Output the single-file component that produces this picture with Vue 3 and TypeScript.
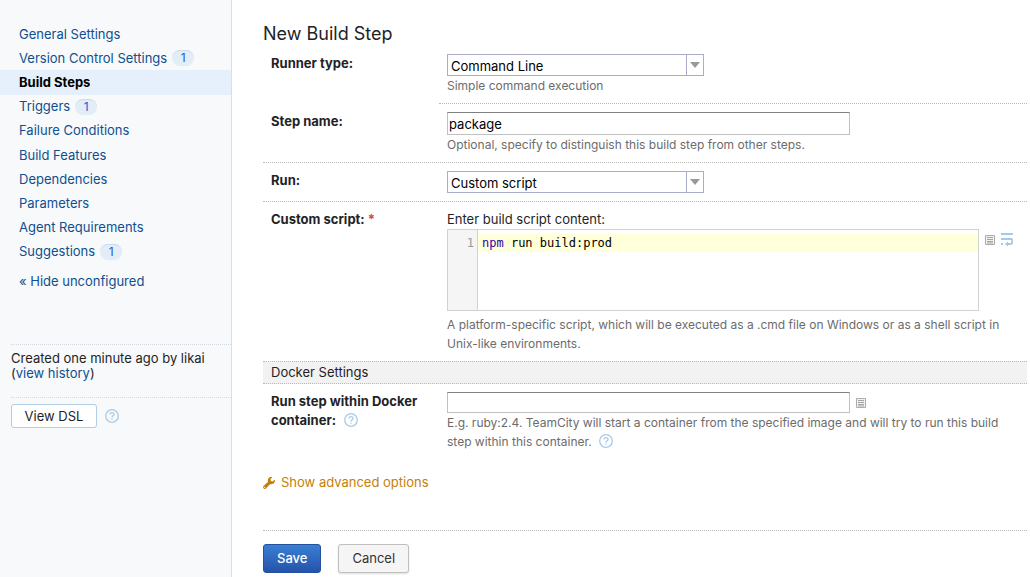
<script setup lang="ts">
import { computed, ref } from 'vue'

interface NavItem {
  label: string
  count?: number
  active?: boolean
}

const navItems: NavItem[] = [
  { label: 'General Settings' },
  { label: 'Version Control Settings', count: 1 },
  { label: 'Build Steps', active: true },
  { label: 'Triggers', count: 1 },
  { label: 'Failure Conditions' },
  { label: 'Build Features' },
  { label: 'Dependencies' },
  { label: 'Parameters' },
  { label: 'Agent Requirements' },
  { label: 'Suggestions', count: 1 },
]

const runnerType = ref('Command Line')
const stepName = ref('package')
const runMode = ref('Custom script')
const script = ref('npm run build:prod')
const dockerImage = ref('')

const scriptLines = computed(() =>
  script.value.split('\n').map((line) => {
    const command = line.match(/^npm\b/)?.[0] ?? ''
    return { command, rest: line.slice(command.length) }
  }),
)
</script>

<template>
  <div class="page">
    <aside class="sidebar">
      <nav>
        <ul class="nav">
          <li v-for="item in navItems" :key="item.label" :class="{ active: item.active }">
            <a href="#">{{ item.label }}</a>
            <span v-if="item.count" class="badge">{{ item.count }}</span>
          </li>
        </ul>
        <a href="#" class="toggle">« Hide unconfigured</a>
      </nav>
      <div class="created">
        Created one minute ago by likai<br />(<a href="#">view history</a>)
      </div>
      <div class="dsl">
        <button type="button" class="dsl-button">View DSL</button>
        <a href="#" class="help" aria-label="Help">
          <svg viewBox="0 0 14 14"><circle cx="7" cy="7" r="6.3" /><path d="M5 5.5C5 3 9 3 9 5.4C9 6.8 7 6.7 7 8.5M7 9.6V10.8" /></svg>
        </a>
      </div>
    </aside>

    <main class="content">
      <h1>New Build Step</h1>
      <form @submit.prevent>
        <div class="row first">
          <label class="name" for="runner">Runner type:</label>
          <div class="value">
            <div class="combo">
              <select id="runner" v-model="runnerType"><option>Command Line</option></select>
              <span class="arrow"></span>
            </div>
            <p class="hint">Simple command execution</p>
          </div>
        </div>

        <div class="row">
          <label class="name" for="step">Step name:</label>
          <div class="value">
            <input id="step" v-model="stepName" class="field" type="text" />
            <p class="hint">Optional, specify to distinguish this build step from other steps.</p>
          </div>
        </div>

        <div class="row">
          <label class="name" for="run">Run:</label>
          <div class="value">
            <div class="combo">
              <select id="run" v-model="runMode"><option>Custom script</option></select>
              <span class="arrow"></span>
            </div>
          </div>
        </div>

        <div class="row script-row">
          <label class="name" for="script">Custom script: <span class="required">*</span></label>
          <div class="value">
            <div class="caption">Enter build script content:</div>
            <div class="editor-line">
              <div class="editor">
                <div class="gutter"><div v-for="(line, i) in scriptLines" :key="i">{{ i + 1 }}</div></div>
                <div class="code">
                  <div v-for="(line, i) in scriptLines" :key="i" class="code-line"><span class="command">{{ line.command }}</span>{{ line.rest }}</div>
                  <textarea id="script" v-model="script" spellcheck="false"></textarea>
                </div>
              </div>
              <button type="button" class="icon list" aria-label="Insert parameter">
                <svg viewBox="0 0 10 10"><path class="frame" d="M.5 .5H9.5V9.5H.5Z" /><path class="lines" d="M2 2.5H8M2 4.5H8M2 6.5H8M2 8H8" /></svg>
              </button>
              <button type="button" class="icon wrap" aria-label="Wrap lines">
                <svg viewBox="0 0 12 13"><path d="M0 1H12M0 6H10C12 6 12 11 9.5 11H6M0 11H2" /><path class="tip" d="M3.8 11L7 8.4V13.4Z" /></svg>
              </button>
            </div>
            <p class="hint">A platform-specific script, which will be executed as a .cmd file on Windows or as a shell script in Unix-like environments.</p>
          </div>
        </div>

        <h2>Docker Settings</h2>

        <div class="row docker">
          <div class="name">
            <label for="docker">Run step within Docker container:</label>
            <a href="#" class="help" aria-label="Help">
              <svg viewBox="0 0 14 14"><circle cx="7" cy="7" r="6.3" /><path d="M5 5.5C5 3 9 3 9 5.4C9 6.8 7 6.7 7 8.5M7 9.6V10.8" /></svg>
            </a>
          </div>
          <div class="value">
            <div class="field-line">
              <input id="docker" v-model="dockerImage" class="field" type="text" />
              <button type="button" class="icon" aria-label="Insert parameter">
                <svg viewBox="0 0 10 10"><path class="frame" d="M.5 .5H9.5V9.5H.5Z" /><path class="lines" d="M2 2.5H8M2 4.5H8M2 6.5H8M2 8H8" /></svg>
              </button>
            </div>
            <p class="hint">
              E.g. ruby:2.4. TeamCity will start a container from the specified image and will try to run this build step within this container.
              <a href="#" class="help" aria-label="Help">
                <svg viewBox="0 0 14 14"><circle cx="7" cy="7" r="6.3" /><path d="M5 5.5C5 3 9 3 9 5.4C9 6.8 7 6.7 7 8.5M7 9.6V10.8" /></svg>
              </a>
            </p>
          </div>
        </div>

        <a href="#" class="advanced">
          <svg viewBox="0 0 12 12"><path d="M11.7 2.6L9.7 4.6L7.9 4.1L7.4 2.3L9.4.3C7.8-.3 6 .3 5.2 1.8C4.7 2.8 4.7 3.8 5 4.7L.6 9.1C-.9 10.7 1.3 12.9 2.9 11.4L7.3 7C8.3 7.4 9.5 7.2 10.4 6.6C11.8 5.7 12.2 4 11.7 2.6ZM1.7 9.7A.6.6 0 1 1 1.7 10.9A.6.6 0 1 1 1.7 9.7Z" /></svg>
          Show advanced options
        </a>

        <div class="actions">
          <button type="submit" class="save">Save</button>
          <button type="button" class="cancel">Cancel</button>
        </div>
      </form>
    </main>
  </div>
</template>

<style>
body {
  margin: 0;
  background: #fff;
}
</style>

<style scoped>
* {
  box-sizing: border-box;
}
.page {
  display: flex;
  min-height: 100vh;
  font: 13px/15px Inter, "Liberation Sans", sans-serif;
  color: #1f2326;
}
button,
input,
select {
  font: inherit;
}
a {
  color: #0f4f8f;
  text-decoration: none;
}
p,
h1,
h2 {
  margin: 0;
}
.sidebar {
  flex: none;
  width: 232px;
  padding-top: 22px;
  background: #f7f9fa;
  border-right: 1px solid #dadfe4;
}
.nav {
  display: grid;
  grid-auto-rows: 1fr;
  height: 242px;
  margin: 0;
  padding: 0;
  list-style: none;
}
.nav li {
  display: flex;
  align-items: center;
  gap: 5px;
  padding-left: 19px;
}
.nav .active {
  background: #e6f0fc;
}
.active a {
  color: #000;
  font-weight: 700;
}
.badge {
  width: 22px;
  height: 16px;
  border-top: 1px solid #c8daec;
  border-radius: 8px;
  background: #e3edf8;
  color: #1d5dcc;
  font-size: 12px;
  line-height: 14px;
  text-align: center;
}
.toggle {
  display: block;
  margin: 10px 0 0 19px;
}
.created {
  margin: 55px 0 0 11px;
  padding-top: 6px;
  height: 53px;
  border-top: 1px dotted #d3dae2;
}
.dsl {
  display: flex;
  align-items: center;
  gap: 8px;
  margin-left: 11px;
  padding-top: 6px;
  border-top: 1px dotted #d3dae2;
}
.dsl-button {
  width: 86px;
  height: 24px;
  padding: 0;
  border: 1px solid #b0cde6;
  border-radius: 3px;
  background: #fff;
  color: #1f2326;
}
.help {
  display: inline-block;
  width: 14px;
  height: 14px;
  margin-left: 4px;
  vertical-align: -2px;
}
.dsl .help {
  margin-left: 0;
}
.name .help {
  margin-left: 8px;
}
.help svg,
.icon svg {
  display: block;
  width: 100%;
  height: 100%;
}
.help svg {
  fill: none;
  stroke: #a8cbe8;
  stroke-width: 1.3;
}
.content {
  flex: 1;
  min-width: 0;
  padding: 22px 3px 0 31px;
}
h1 {
  font-size: 18px;
  line-height: 24px;
  font-weight: 400;
}
.row {
  display: grid;
  grid-template-columns: 176px 1fr;
  border-bottom: 1px dotted #b8b8b8;
}
.row.first,
.script-row,
.docker {
  border-bottom: 0;
}
.first .value {
  border-bottom: 1px dotted #b8b8b8;
}
.name {
  padding: 8px 8px 0;
  font-weight: 700;
  line-height: 19px;
}
.value {
  min-width: 0;
  padding: 8px;
}
.required {
  color: #d8434e;
}
.combo {
  position: relative;
  width: 257px;
  height: 22px;
}
.combo select {
  width: 100%;
  height: 100%;
  padding: 2px 20px 0 3px;
  appearance: none;
  border: 1px solid #a9adc8;
  border-radius: 0;
  background: #fff;
  color: #000;
}
.arrow {
  position: absolute;
  top: 0;
  right: 0;
  display: grid;
  place-items: center;
  width: 18px;
  height: 22px;
  border: 1px solid #a9adc8;
  pointer-events: none;
}
.arrow::before {
  content: "";
  border: 5px solid transparent;
  border-top: 6px solid #999;
  border-bottom: 0;
}
.hint {
  color: #6b6c6d;
  font-size: 12px;
  line-height: 19px;
}
.field {
  display: block;
  width: 403px;
  height: 23px;
  padding: 1px;
  border: 1px solid #c0c0c0;
  border-top-color: #808080;
  border-radius: 0;
  background: #fff;
  color: #000;
}
.caption {
  line-height: 19px;
}
.editor-line {
  display: flex;
  align-items: flex-start;
  margin-bottom: 4px;
}
.editor {
  display: flex;
  flex: 0 1 532px;
  height: 82px;
  border: 1px solid #d2d2d2;
  font: 12px/18px "DejaVu Sans Mono", monospace;
}
.gutter {
  width: 30px;
  padding: 4px 3px 0 0;
  border-right: 1px solid #d2d2d2;
  background: #f5f5f5;
  color: #999;
  text-align: right;
}
.code {
  position: relative;
  flex: 1;
  padding-top: 4px;
  color: #000;
}
.code-line {
  height: 18px;
  padding-left: 4px;
  background: #ffffda;
  white-space: pre;
}
.command {
  color: #30a;
}
.code textarea {
  position: absolute;
  inset: 0;
  padding: 4px 4px 0;
  border: 0;
  outline: 0;
  resize: none;
  background: transparent;
  color: transparent;
  caret-color: #000;
  font: inherit;
}
.icon {
  flex: none;
  width: 10px;
  height: 10px;
  padding: 0;
  border: 0;
  background: none;
}
.icon svg {
  fill: none;
}
.frame {
  fill: #f2f2f2;
  stroke: #adadad;
}
.lines {
  stroke: #a4a4a4;
}
.icon.list {
  margin: 6px 6px 0;
}
.icon.wrap {
  width: 12px;
  height: 13px;
  margin-top: 4px;
}
.wrap path {
  stroke: #a9c8e4;
  stroke-width: 2;
}
.wrap .tip {
  fill: #a9c8e4;
  stroke: none;
}
h2 {
  padding: 0 8px;
  border: dotted #b8b8b8;
  border-width: 1px 0;
  background: #f2f2f2;
  font-size: 13px;
  line-height: 21px;
  font-weight: 400;
}
.docker .field {
  height: 21px;
}
.field-line {
  display: flex;
  align-items: center;
  gap: 6px;
}
.advanced {
  display: flex;
  align-items: center;
  gap: 6px;
  margin-top: 16px;
  color: #c58007;
}
.advanced svg {
  width: 12px;
  height: 12px;
  fill: #c58007;
}
.actions {
  display: flex;
  gap: 17px;
  margin-top: 40px;
  padding-top: 13px;
  border-top: 1px dotted #b8b8b8;
}
.actions button {
  height: 29px;
  padding: 0 13px;
  border-radius: 3px;
}
.save {
  border: 1px solid #2450a0;
  background: linear-gradient(#3a80d2, #2552ab);
  color: #fff;
  font-weight: 500;
}
.cancel {
  border: 1px solid #bfbfbf;
  background: #f5f5f5;
  color: #333;
  box-shadow: 0 1px 2px #0002;
}
</style>
